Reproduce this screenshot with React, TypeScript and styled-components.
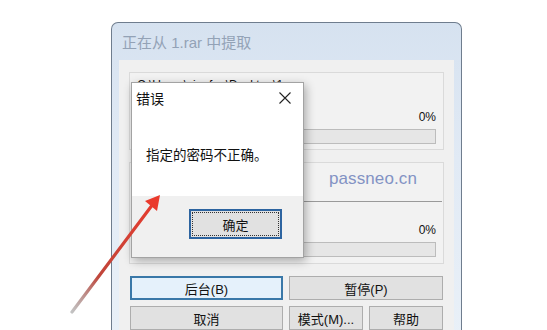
import styled, { createGlobalStyle } from 'styled-components';

const GlobalStyle = createGlobalStyle`
  html, body {
    margin: 0;
    padding: 0;
    background: #ffffff;
  }
  body {
    font-family: 'Liberation Sans', 'Noto Sans CJK SC', sans-serif;
  }
`;

const Page = styled.div`
  position: relative;
  width: 547px;
  height: 330px;
  overflow: hidden;
  background: #fff;
  padding: 22px 0 0 111px;
  box-sizing: border-box;
`;

const Window = styled.div`
  width: 351px;
  height: 340px;
  box-sizing: border-box;
  border: 1px solid #6f7d8e;
  border-bottom: none;
  border-radius: 7px 7px 0 0;
  background: linear-gradient(180deg, #d6e2f0 0%, #e1eaf5 40%, #eaf1f8 100%);
  padding: 0 7px;
  display: flex;
  flex-direction: column;
`;

const TitleBar = styled.div`
  height: 37px;
  display: flex;
  align-items: center;
  padding-left: 3px;
  font-size: 15px;
  color: #93a2b6;
`;

const Client = styled.div`
  flex: 1;
  background: #f0f0f0;
  padding: 12px 10px 0 10px;
  display: flex;
  flex-direction: column;
`;

const Group = styled.div<{ $h: number }>`
  height: ${(p) => p.$h}px;
  box-sizing: border-box;
  border: 1px solid #dadada;
  background: #f2f2f2;
  padding: 0 7px 0 2px;
  display: flex;
  flex-direction: column;
  margin-bottom: 12px;
`;

const PathText = styled.div`
  font-size: 12px;
  color: #111;
  padding: 5px 0 0 5px;
  height: 17px;
`;

const Percent = styled.div<{ $top: number }>`
  text-align: right;
  font-size: 12px;
  color: #111;
  margin-top: ${(p) => p.$top}px;
  height: 15px;
  line-height: 15px;
`;

const Bar = styled.div`
  height: 15px;
  box-sizing: border-box;
  border: 1px solid #bcbcbc;
  background: #e6e6e6;
  margin-top: 4px;
`;

const Watermark = styled.div`
  font-size: 17px;
  color: #8393c4;
  padding-left: 197px;
  margin-top: 6px;
  height: 24px;
  letter-spacing: 0.1px;
`;

const Separator = styled.div`
  height: 1px;
  background: #9a9a9a;
  margin: 8px -6px 0 -1px;
`;

const ButtonGrid = styled.div`
  display: grid;
  grid-template-columns: 153px 74px 74px;
  column-gap: 6px;
  row-gap: 6px;
  padding-left: 1px;
`;

const Button = styled.div<{ $span?: number; $focus?: boolean }>`
  grid-column: span ${(p) => p.$span ?? 1};
  height: 24px;
  box-sizing: border-box;
  border: ${(p) => (p.$focus ? '2px solid #3a78a8' : '1px solid #adadad')};
  background: ${(p) => (p.$focus ? '#e5f1fb' : '#e1e1e1')};
  display: flex;
  align-items: center;
  justify-content: center;
  font-size: 13px;
  color: #111;
`;

const Dialog = styled.div`
  position: absolute;
  left: 131px;
  top: 82px;
  width: 173px;
  height: 176px;
  box-sizing: border-box;
  background: #ffffff;
  border: 1px solid #a3a3a3;
  box-shadow: 2px 3px 9px rgba(0, 0, 0, 0.3);
  display: flex;
  flex-direction: column;
`;

const DialogTitle = styled.div`
  height: 30px;
  display: flex;
  align-items: center;
  justify-content: space-between;
  padding: 0 12px 0 4px;
  font-size: 14px;
  color: #111;
`;

const Message = styled.div`
  flex: 1;
  padding: 31px 0 0 14px;
  font-size: 13.5px;
  color: #111;
`;

const DialogFooter = styled.div`
  height: 61px;
  background: #f0f0f0;
  display: flex;
  justify-content: flex-end;
  align-items: flex-start;
  padding: 13px 21px 0 0;
  box-sizing: border-box;
`;

const OkButton = styled.div`
  width: 93px;
  height: 30px;
  box-sizing: border-box;
  border: 2px solid #2d64a0;
  background: #e1e1e1;
  display: flex;
  align-items: center;
  justify-content: center;
  font-size: 13px;
  color: #111;
  outline: 1px dotted #333;
  outline-offset: -4px;
`;

const ArrowLayer = styled.svg`
  position: absolute;
  left: 0;
  top: 0;
  pointer-events: none;
`;

export default function App() {
  return (
    <>
      <GlobalStyle />
      <Page>
        <Window>
          <TitleBar>正在从 1.rar 中提取</TitleBar>
          <Client>
            <Group $h={78}>
              <PathText>C:\Users\xiaofen\Desktop\1.rar</PathText>
              <Percent $top={15}>0%</Percent>
              <Bar />
            </Group>
            <Group $h={102}>
              <Watermark>passneo.cn</Watermark>
              <Separator />
              <Percent $top={21}>0%</Percent>
              <Bar />
            </Group>
            <ButtonGrid>
              <Button $focus>后台(B)</Button>
              <Button $span={2}>暂停(P)</Button>
              <Button>取消</Button>
              <Button>模式(M)...</Button>
              <Button>帮助</Button>
            </ButtonGrid>
          </Client>
        </Window>

        <Dialog>
          <DialogTitle>
            <span>错误</span>
            <svg width="12" height="12" viewBox="0 0 12 12">
              <path d="M0.5 0.5 L11.5 11.5 M11.5 0.5 L0.5 11.5" stroke="#222" strokeWidth="1.1" />
            </svg>
          </DialogTitle>
          <Message>指定的密码不正确。</Message>
          <DialogFooter>
            <OkButton>确定</OkButton>
          </DialogFooter>
        </Dialog>

        <ArrowLayer width="547" height="330" viewBox="0 0 547 330">
          <defs>
            <linearGradient id="arrowGrad" x1="72" y1="312" x2="160" y2="195" gradientUnits="userSpaceOnUse">
              <stop offset="0" stopColor="#9a9a9a" stopOpacity="0.6" />
              <stop offset="0.3" stopColor="#c0463b" />
              <stop offset="1" stopColor="#ea3a2c" />
            </linearGradient>
          </defs>
          <path d="M72 312 L153 204" stroke="url(#arrowGrad)" strokeWidth="3.2" strokeLinecap="round" />
          <path d="M160 195 L145 201 L157 211 Z" fill="#ea3a2c" />
        </ArrowLayer>
      </Page>
    </>
  );
}
